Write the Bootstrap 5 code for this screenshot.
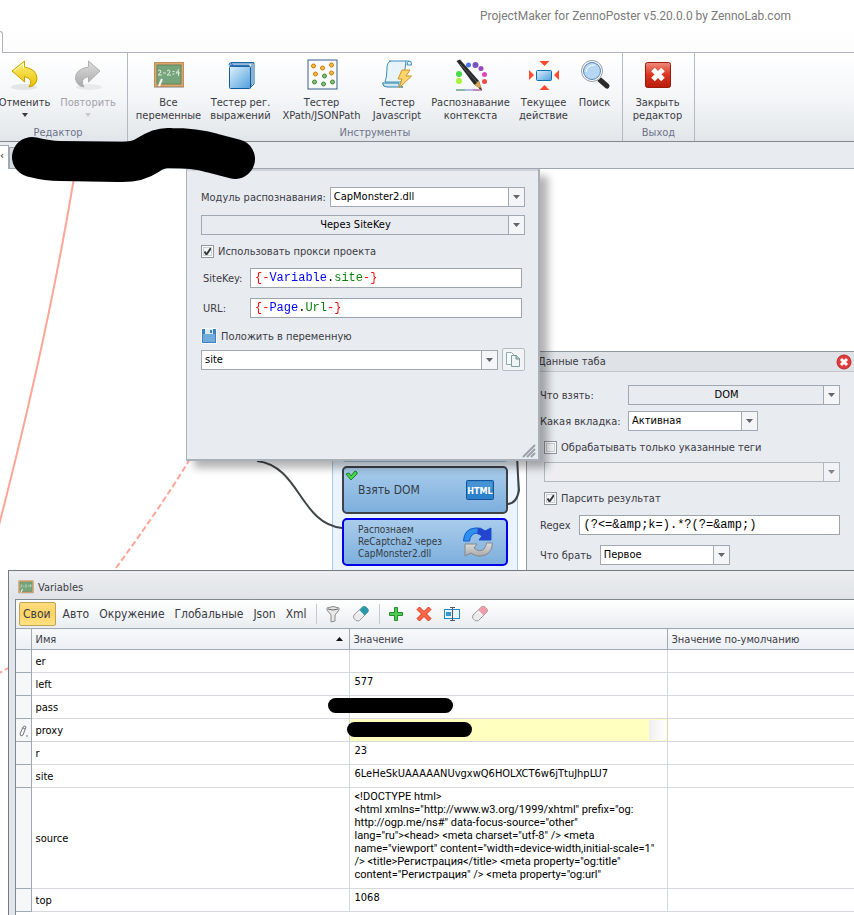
<!DOCTYPE html>
<html lang="ru">
<head>
<meta charset="utf-8">
<meta name="viewport" content="width=device-width, initial-scale=1">
<title>ProjectMaker for ZennoPoster</title>
<link rel="stylesheet" href="https://cdn.jsdelivr.net/npm/bootstrap@5.3.0/dist/css/bootstrap.min.css">
<style>
  :root { --edge: #a0a8b1; --face: #e8ebf0; --ink: #3b3b44; }
  body { font: 11px/13px "DejaVu Sans Condensed", "Noto Sans", sans-serif; color: var(--ink); background: #fff; }
  label, select, input, button { font: inherit; }
  button { border: 0; background: none; padding: 0; color: inherit; }
  svg { flex: none; }

  .caption-bar { height: 53px; background: linear-gradient(#fff 50%, #fcfcfd); border-bottom: 1px solid #afb3b9; }
  .caption-text { font: 12px/16px Roboto, sans-serif; color: #7b7b7b; padding: 8px 63px 0 0; }
  .file-tab { width: 3px; height: 22px; margin-bottom: -1px; background: #fff; border: solid #afb3b9; border-width: 1px 1px 0 0; border-radius: 0 3px 0 0; }

  .ribbon { height: 89px; background: linear-gradient(#fff, #f4f6f8 50%, #e2e6ea); border-bottom: 1px solid #83898f; }
  .ribbon-group { border-right: 1px solid #b4b9bf; display: grid; grid-template-rows: 1fr 15px; }
  .ribbon-tools { display: grid; padding: 6px 6px 0 4px; align-content: start; }
  .ribbon-tools button { display: flex; flex-direction: column; align-items: center; white-space: nowrap; }
  .ribbon-tools svg.tool { margin-bottom: 5px; }
  .ribbon-title { text-align: center; color: #6d7389; }
  .ribbon-edit .ribbon-title { padding-right: 11px; }
  .ribbon-edit .ribbon-tools { padding: 6px 0 0; grid-template-columns: 49px 78px; }
  .is-off { color: #a3a3ab; }
  .cols-tools { grid-template-columns: 73px 71px 91px 60px 87px 59px 43px; }
  .cols-exit { grid-template-columns: 61px; }
  .caret { width: 0; border: solid transparent; border-width: 4px 3px 0; border-top-color: currentColor; margin-top: 4px; }

  .doc-tabs { height: 27px; background: var(--face); border-bottom: 1px solid var(--edge); }
  .doc-tab-on { width: 9px; height: 24px; margin-bottom: -1px; background: #fff; border: solid var(--edge); border-width: 1px 1px 0 0; line-height: 20px; color: #111; }
  .doc-tab-off { width: 178px; height: 21px; background: #d5dae1; border: 1px solid var(--edge); border-bottom: 0; }
  .scribble { left: 0; top: 120px; z-index: 9; pointer-events: none; }

  .desk { min-height: 746px; }
  .wires { inset: 0; width: 100%; height: 100%; }

  .node-lane { left: 332px; top: 280px; width: 186px; height: 130px; background: #ebf4fe; border: 1px solid #a9c9e8; padding: 0 9px; }
  .node-stub { height: 12px; background: #9fc6e6; border-radius: 0 0 4px 4px; margin-bottom: 4px; }
  .node { height: 48px; border: 2px solid #3c4248; border-radius: 5px; background: linear-gradient(#a9cceb, #7dafdd); margin-bottom: 4px; color: #333b45; padding: 0 12px 0 14px; }
  .node-current { border-color: #0000e6; font-size: 10px; line-height: 12px; }
  .node-name { font-size: 12px; }
  .node-tick { left: 1px; top: 2px; }

  .pane-tab { left: 526px; right: 0; top: 182px; height: 230px; background: var(--face); border: solid #8f979f; border-width: 1px 0 0 1px; }
  .pane-head { height: 20px; background: #dfe3e7; border-bottom: 1px solid #c3c8cd; padding: 0 2px 0 11px; }
  .pane-body { padding: 13px 14px 0 13px; }
  .w-label { width: 88px; }
  .w-pick { width: 130px; }

  .dialog-box { left: 186px; top: 0; width: 354px; height: 292px; background: var(--face); border: solid #a9b0b8; border-width: 0 2px 2px 1px; padding: 18px 13px 0 14px; box-shadow: 8px 7px 8px rgba(0,0,0,.3), inset 0 2px 0 #d0d4da; z-index: 3; }
  .grip { right: 2px; bottom: 1px; }
  .gap-xs { margin-top: 6px; }
  .gap-s { margin-top: 8px; }
  .gap-m { margin-top: 10px; }
  .key-label { width: 49px; flex: none; padding-left: 2px; }
  .key-field { margin-right: 3px; }

  .pick { height: 20px; border: 1px solid var(--edge); border-radius: 0; appearance: none; color: #000; padding: 0 18px 0 3px; min-width: 0; width: 100%; line-height: 18px;
    background: url("data:image/svg+xml,%3Csvg xmlns='http://www.w3.org/2000/svg' width='16' height='18'%3E%3Crect width='16' height='18' fill='%23f3f5f7'/%3E%3Cpath d='M0 0h1v18H0z' fill='%23a0a8b1'/%3E%3Cpath d='M5 7h7L8.500 11z' fill='%2360656b'/%3E%3C/svg%3E") right center no-repeat #fff; }
  .pick-face { background-color: var(--face); text-align: center; text-align-last: center; }
  .pick:disabled { background-color: #f0f0f0; opacity: .75; }
  .code-box { background: #fff; height: 20px; }
  .code-input { display: block; width: 100%; height: 20px; border: 1px solid #9ba3ab; border-radius: 0; padding: 0 4px; background: transparent; color: #000; font: 12px/18px "Liberation Mono", monospace; }
  .tint { color: transparent; background-origin: content-box; background-clip: text; -webkit-background-clip: text; }
  .tint-variable { background-image: linear-gradient(90deg, #f00 2ch, #00f 2ch 10ch, #000 10ch 11ch, #008000 11ch 15ch, #f00 15ch); }
  .tint-page { background-image: linear-gradient(90deg, #f00 2ch, #00f 2ch 6ch, #000 6ch 7ch, #008000 7ch 10ch, #f00 10ch); }
  .tick { appearance: none; flex: none; width: 13px; height: 13px; margin: 0; border: 1px solid #8f979f; background: #f4f5f6; box-shadow: inset 0 0 0 1px #fff, inset 0 0 0 2px #ccd0d4; }
  .tick:checked { background: url("data:image/svg+xml,%3Csvg xmlns='http://www.w3.org/2000/svg' width='11' height='11'%3E%3Cpath d='M2.500 5.500l2 3L9 2' fill='none' stroke='%2333383d' stroke-width='2'/%3E%3C/svg%3E") center no-repeat #f4f5f6; }
  .copy-btn { width: 23px; height: 23px; border: 1px solid #b6bcc3; border-radius: 2px; background: #f1f3f5; }

  .vars { margin: 401px 0 0 8px; background: #e2e6ea; border: solid #727a80; border-width: 1px 0 0 1px; padding-left: 6px; z-index: 5; }
  .vars-head { height: 28px; margin-left: -6px; padding: 4px 0 0 9px; background: linear-gradient(#eceef1, #dfe3e7); }
  .vars-panel { background: #fff; border: solid #818990; border-width: 1px 0 0 1px; }
  .vars-tools { height: 28px; background: linear-gradient(#fff, #e9edf0); padding: 0 3px; font-size: 12px; line-height: 16px; }
  .vars-tools button { height: 24px; padding: 0 5px; }
  .vars-tools .on { border: 1px solid #c4a254; border-radius: 2px; background: linear-gradient(#fbdc7d, #fdd466 50%, #ffe183); padding: 0 4px 0 3px; margin-right: 2px; }
  .bar-line { width: 1px; height: 20px; background: #c5cacf; margin: 0 2px 0 4px; }
  .vars-table { width: 100%; table-layout: fixed; border-collapse: collapse; color: #000; }
  .vars-table th { height: 21px; font-weight: 400; padding: 0 4px; background: linear-gradient(#f8f9fa, #ebeff4); border: solid var(--edge); border-width: 1px 0 1px 1px; color: var(--ink); }
  .vars-table td { height: 23px; padding: 0 0 0 4px; border: solid #d5d9dd; border-width: 0 0 1px 1px; }
  .vars-table td:first-child { background: #f5f7f9; padding: 0; text-align: center; border-left: 0; border-bottom-color: var(--edge); }
  .vars-table th:first-child { border-left: 0; }
  .vars-table td:nth-child(2) { border-left-color: var(--edge); }
  .vars-table td:nth-child(3) { vertical-align: top; padding: 2px 0 0 5px; }
  .vars-table .tall td { height: 101px; }
  .vars-table .markup { font-family: Roboto, sans-serif; }
  .vars-table .edited { background: linear-gradient(90deg, #efefef, #fff) right 1px center / 17px 20px no-repeat #ffffbf; }
  .c-mark { width: 15px; }
  .c-main { width: 318px; }
  .redact { width: 125px; height: 15px; border-radius: 8px; background: #000; }
  .redact-pass { left: -27px; top: 0; }
  .redact-proxy { left: -8px; top: 1px; }
</style>
<script src="https://cdn.jsdelivr.net/npm/bootstrap@5.3.0/dist/js/bootstrap.bundle.min.js"></script>
</head>
<body class="d-flex flex-column min-vh-100 position-relative overflow-hidden">

<svg width="0" height="0" class="position-absolute" aria-hidden="true">
  <defs>
    <linearGradient id="gBlue" x1="0" y1="0" x2="1" y2="1"><stop offset="0" stop-color="#dff1fd"/><stop offset="1" stop-color="#4f9fdc"/></linearGradient>
    <linearGradient id="gGold" x1="0" y1="0" x2="0" y2="1"><stop offset="0" stop-color="#fff27a"/><stop offset="1" stop-color="#e6bf00"/></linearGradient>
    <linearGradient id="gGray" x1="0" y1="0" x2="0" y2="1"><stop offset="0" stop-color="#dedede"/><stop offset="1" stop-color="#a9a9a9"/></linearGradient>
    <linearGradient id="gRed" x1="0" y1="0" x2="0" y2="1"><stop offset="0" stop-color="#ef8d7c"/><stop offset=".5" stop-color="#d93420"/><stop offset="1" stop-color="#b81b0a"/></linearGradient>
    <symbol id="board" viewBox="0 0 32 32">
      <path d="M1 27h30v2H1z" fill="#b9bcc0"/>
      <rect x="1.500" y="3.500" width="29" height="24" fill="#dba76c" stroke="#c0905a"/>
      <rect x="4" y="6" width="24" height="19" fill="#76a57c" stroke="#68845f"/>
      <path d="M5 12q2-2 3 0q0 2-3 4h4M10 14h3M14 12q2-2 3 0q0 2-3 4h4M19.500 12.500h2M19.500 15h2M26 10l-3 4h4M25.500 12v5" fill="none" stroke="#e6efe4" stroke-width=".9"/>
      <path d="M9 20l-3 7" stroke="#fff" stroke-width="2"/>
    </symbol>
    <symbol id="eraser" viewBox="0 0 18 18">
      <path d="M2 10L11 1.500Q12.500 1 14 2L16 4Q17 5.500 16 7L7.500 15.500Q6 16.500 4 15.500L2 13.500Q1 12 2 10z" fill="#ebebeb" stroke="#999"/>
      <path d="M7.500 5L11 1.500Q12.500 1 14 2L16 4Q17 5.500 16 7L12.500 10.500z" fill="currentColor"/>
      <path d="M4 10l3-3 4 3" stroke="#fff" fill="none"/>
    </symbol>
  </defs>
</svg>

<header class="caption-bar d-flex justify-content-between">
  <span class="file-tab align-self-end"></span>
  <span class="caption-text">ProjectMaker for ZennoPoster v5.20.0.0 by ZennoLab.com</span>
</header>

<nav class="ribbon d-flex" aria-label="Лента">
  <section class="ribbon-group ribbon-edit">
    <div class="ribbon-tools">
      <button type="button"><svg class="tool" width="32" height="32" viewBox="0 0 32 32"><ellipse cx="15" cy="28" rx="13" ry="3" fill="#e4e5e7"/><path d="M3 12L15.500 2v6Q28 10 28 20Q27 27 20 28Q25 20 15.500 17.500V23z" fill="url(#gGold)" stroke="#c9a400"/><path d="M5 12l9.500-7.500v5" fill="none" stroke="#fffbc4"/></svg>Отменить<span class="caret"></span></button>
      <button type="button" disabled class="is-off"><svg class="tool" width="32" height="32" viewBox="0 0 32 32"><ellipse cx="17" cy="28" rx="13" ry="3" fill="#e9eaec"/><path d="M28 12L16.500 2v6Q3 10 3.500 20Q5 27 12 28Q7 20 16.500 17.500V23z" fill="url(#gGray)" stroke="#b0b0b0"/></svg>Повторить<span class="caret opacity-50"></span></button>
    </div>
    <div class="ribbon-title">Редактор</div>
  </section>
  <section class="ribbon-group">
    <div class="ribbon-tools cols-tools">
      <button type="button"><svg class="tool" width="32" height="32"><use href="#board"/></svg>Все<br>переменные</button>
      <button type="button"><svg class="tool" width="32" height="32" viewBox="0 0 32 32"><path d="M6 4h23v21l-4 4z" fill="#fff" stroke="#1263a8"/><path d="M4 6q0-2.500 3-2.500h22M27 5v20l-2 3" fill="none" stroke="#1b66aa"/><rect x="4.500" y="7.500" width="21" height="22" rx="1" fill="url(#gBlue)" stroke="#14599c"/><path d="M4.500 6.500h20" stroke="#2d75b4" stroke-width="2"/></svg>Тестер рег.<br>выражений</button>
      <button type="button"><svg class="tool" width="32" height="32" viewBox="0 0 32 32"><rect x="2" y="1" width="29" height="29" fill="#fbfbfb" stroke="#395f8d"/><g fill="#f7bd45" stroke="#c87a08"><circle cx="7.500" cy="7" r="2"/><circle cx="16.500" cy="9" r="2"/><circle cx="25.500" cy="6" r="2"/><circle cx="9.500" cy="15" r="2"/><circle cx="25.500" cy="14" r="2"/></g><g fill="#86bf78" stroke="#3b873a"><circle cx="18.500" cy="17" r="2"/><circle cx="8.500" cy="23" r="2"/><circle cx="17.500" cy="25" r="2"/><circle cx="26.500" cy="23" r="2"/></g></svg>Тестер<br>XPath/JSONPath</button>
      <button type="button"><svg class="tool" width="32" height="32" viewBox="0 0 32 32"><path d="M8 2h20q3 0 2.500 4H26q0-3 2-4M10 2Q6 3 6 9q0 9-2 14H20q4-8 5-21" fill="#e8f4f9" stroke="#3c8db5"/><path d="M1.500 24H18q-1 4 4 4H6q-4 0-4.500-4z" fill="#cde8f4" stroke="#2b80ab"/><path d="M21 11h8l-4 6h5.500L18 29l3-9h-4z" fill="#fbd56e" stroke="#d59220"/></svg>Тестер<br>Javascript</button>
      <button type="button"><svg class="tool" width="32" height="32" viewBox="0 0 32 32"><path d="M1 31h26" stroke="#647ccb"/><path d="M1 31h9" stroke="#5dbb65"/><path d="M18 31h9" stroke="#dd5a8a"/><g><circle cx="4" cy="22" r="3" fill="#a8f538"/><circle cx="4" cy="15" r="3" fill="#45dc45"/><circle cx="13.500" cy="6" r="2.500" fill="#4a76e8"/><circle cx="20.500" cy="6" r="3" fill="#7454bc"/><circle cx="26" cy="9.500" r="2.500" fill="#9848b4"/><circle cx="29.500" cy="15.500" r="2.500" fill="#e043b7"/><circle cx="29.500" cy="22.500" r="2.500" fill="#f34848"/></g><path d="M1.500 2L5 .5 24 22l3 9-8-5.500z" fill="#292929"/><path d="M19 25.500l2-.5 1-2 2-1 3 9z" fill="#d6a752"/><path d="M5 5l17 18" stroke="#5d5d5d"/><path d="M25 28l2 3-3-1.500z" fill="#222"/></svg>Распознавание<br>контекста</button>
      <button type="button"><svg class="tool" width="32" height="32" viewBox="0 0 32 32"><rect x="8.500" y="11.500" width="15" height="10" rx="1" fill="url(#gBlue)" stroke="#0c70a8"/><g fill="#ff4a2d"><path d="M11.500 2h10l-5 5zM11.500 31h10l-5-5zM1 11v10l5-5zM31 11v10l-5-5z"/></g></svg>Текущее<br>действие</button>
      <button type="button"><svg class="tool" width="32" height="32" viewBox="0 0 32 32"><path d="M20 20l8 7" stroke="#2b2b2b" stroke-width="5" stroke-linecap="round"/><circle cx="13" cy="12" r="9.500" fill="url(#gBlue)" stroke="#fff" stroke-width="3"/><circle cx="13" cy="12" r="10.500" fill="none" stroke="#959ba3"/><circle cx="13" cy="12" r="8.500" fill="#b6d7f4" stroke="#5883b2"/><path d="M7 13q1-7 9-7" fill="none" stroke="#fff"/></svg>Поиск</button>
    </div>
    <div class="ribbon-title">Инструменты</div>
  </section>
  <section class="ribbon-group">
    <div class="ribbon-tools cols-exit">
      <button type="button"><svg class="tool" width="32" height="32" viewBox="0 0 32 32"><rect x="3.500" y="3.500" width="25" height="25" rx="2" fill="url(#gRed)" stroke="#9d1a0c"/><path d="M11 10.500l10 10M21 10.500l-10 10" stroke="#fff" stroke-width="5"/></svg>Закрыть<br>редактор</button>
    </div>
    <div class="ribbon-title">Выход</div>
  </section>
</nav>

<div class="doc-tabs d-flex align-items-end"><span class="doc-tab-on">‹</span><span class="doc-tab-off"></span></div>
<svg class="scribble position-absolute" width="270" height="70" viewBox="0 120 270 70" aria-hidden="true"><path d="M32 157Q48 161 60 161L118 162Q136 163 148 155Q160 147 170 148Q195 148 212 153L235 159" fill="none" stroke="#000" stroke-width="40" stroke-linecap="round" stroke-linejoin="round"/></svg>

<main class="desk position-relative flex-grow-1 d-flex flex-column">
  <svg class="wires position-absolute" aria-hidden="true"><g transform="translate(0 -169)" fill="none"><path d="M74 178Q47 340 -1 525" stroke="#ffa597" stroke-width="2"/><path d="M190 459Q157 513 110 576M10 667L-4 675" stroke="#ffa597" stroke-width="2" stroke-dasharray="6 3"/></g></svg>

  <div class="node-lane position-absolute">
    <div class="node-stub"></div>
    <div class="node position-relative d-flex align-items-center justify-content-between">
      <svg class="node-tick position-absolute" width="13" height="12" viewBox="0 0 13 12"><path d="M1 4l3-1 2 3 4-5 2 1v2L6 10z" fill="#4bd84e" stroke="#18861f"/></svg>
      <span class="node-name">Взять DOM</span>
      <svg width="28" height="20" viewBox="0 0 28 20" role="img" aria-label="HTML"><rect x=".5" y=".5" width="27" height="19" rx="1" fill="#2b82ca" stroke="#14549c"/><path d="M1.500 1.500h25v8h-25z" fill="#4593d2"/><text x="14" y="14" text-anchor="middle" fill="#fff" font-family="DejaVu Sans Condensed, sans-serif" font-weight="700" font-size="9">HTML</text></svg>
    </div>
    <div class="node node-current d-flex align-items-center justify-content-between">
      <span>Распознаем<br>ReCaptcha2 через<br>CapMonster2.dll</span>
      <svg width="32" height="32" viewBox="0 0 32 32"><path d="M1.500 15Q2 3 13 2Q19 1 23 5L29 2V14H17L20 10Q14 5 10 9Q8 11 7.500 15z" fill="#2b90f0" stroke="#185ac0"/><path d="M16 2Q20 2 23 5L29 2V14H17L20 10Q18 8 15 8z" fill="#2444cf"/><path d="M30.500 17Q30 29 19 30Q13 31 9 27L3 30V18H15L12 22Q18 27 22 23Q24 21 24.500 17z" fill="url(#gGray)" stroke="#85888c"/></svg>
    </div>
  </div>
  <svg class="wires position-absolute" aria-hidden="true"><g transform="translate(0 -169)" fill="none" stroke="#3f4449" stroke-width="2"><path d="M257 461C300 466 300 524 342 528M517 455Q518 478 519 490Q517 503 508 504"/></g></svg>

  <section class="pane-tab position-absolute">
    <div class="pane-head d-flex align-items-center justify-content-between">Данные таба
      <button type="button" aria-label="Закрыть"><svg class="d-block" width="16" height="16" viewBox="0 0 16 16"><circle cx="8" cy="8" r="7" fill="#e33b3b" stroke="#bb2929"/><path d="M5 5l6 6M11 5l-6 6" stroke="#fff" stroke-width="3"/></svg></button>
    </div>
    <div class="pane-body">
      <div class="d-flex align-items-center"><label for="what" class="w-label flex-shrink-0">Что взять:</label><select id="what" class="pick pick-face"><option>DOM</option></select></div>
      <div class="d-flex align-items-center gap-xs"><label for="which" class="w-label flex-shrink-0 text-nowrap">Какая вкладка:</label><div class="w-pick"><select id="which" class="pick"><option>Активная</option></select></div></div>
      <div class="d-flex align-items-center gap-1 gap-m ps-1"><input class="tick" type="checkbox" id="tags"><label for="tags">Обрабатывать только указанные теги</label></div>
      <div class="gap-s ps-1 d-flex"><select class="pick" disabled aria-label="Теги"><option></option></select></div>
      <div class="d-flex align-items-center gap-1 gap-m ps-1"><input class="tick" type="checkbox" id="parse" checked><label for="parse">Парсить результат</label></div>
      <div class="d-flex align-items-center gap-m gap-2"><label for="regex">Regex</label><div class="code-box flex-grow-1"><input class="code-input" id="regex" value="(?&lt;=&amp;amp;k=).*?(?=&amp;amp;)"></div></div>
      <div class="d-flex align-items-center gap-m gap-2"><label for="take">Что брать</label><div class="w-pick"><select id="take" class="pick"><option>Первое</option></select></div></div>
    </div>
  </section>

  <section class="dialog-box position-absolute">
    <div class="d-flex align-items-center gap-1"><label for="module" class="text-nowrap flex-shrink-0">Модуль распознавания:</label><select id="module" class="pick"><option>CapMonster2.dll</option></select></div>
    <div class="gap-s d-flex"><select class="pick pick-face" aria-label="Способ"><option>Через SiteKey</option></select></div>
    <div class="d-flex align-items-center gap-1 gap-m"><input class="tick" type="checkbox" id="proxyUse" checked><label for="proxyUse">Использовать прокси проекта</label></div>
    <div class="d-flex align-items-center gap-m"><label for="sitekey" class="key-label">SiteKey:</label><div class="code-box flex-grow-1 key-field"><input class="code-input tint tint-variable" id="sitekey" value="{-Variable.site-}"></div></div>
    <div class="d-flex align-items-center gap-m"><label for="url" class="key-label">URL:</label><div class="code-box flex-grow-1 key-field"><input class="code-input tint tint-page" id="url" value="{-Page.Url-}"></div></div>
    <div class="d-flex align-items-center gap-1 gap-m"><svg width="16" height="16" viewBox="0 0 16 16"><path d="M0 0h16v16H0z" fill="#fff"/><rect x="1" y="1" width="14" height="14" fill="#3a83c2"/><rect x="2" y="6" width="12" height="8" fill="#70abd9"/><path d="M4 1h8v5H4z" fill="#dcecf7"/><path d="M9 2h2v3H9z" fill="#4381b5"/></svg><label for="target">Положить в переменную</label></div>
    <div class="d-flex align-items-center gap-1 mt-1"><select id="target" class="pick"><option>site</option></select><button type="button" class="copy-btn flex-shrink-0 d-flex align-items-center justify-content-center" aria-label="Копировать"><svg width="17" height="17" viewBox="0 0 17 17"><path d="M1.500 1.500h5l3 3v9h-8z" fill="#f5fafa" stroke="#8fa9ae"/><path d="M6.500 4.500h5l3 3v8h-8z" fill="#edf6f5" stroke="#829da2"/><path d="M11 4v4h4" fill="#a9cccd" stroke="#6e8e94"/></svg></button></div>
    <svg class="grip position-absolute" width="14" height="14" viewBox="0 0 14 14"><path d="M1 13L13 1M5 13l8-8M9 13l4-4" stroke="#9da2a8" stroke-width="2"/></svg>
  </section>

  <section class="vars position-relative flex-grow-1 d-flex flex-column">
    <div class="vars-head d-flex align-items-center gap-1"><svg width="16" height="16"><use href="#board"/></svg>Variables</div>
    <div class="vars-panel flex-grow-1">
      <div class="vars-tools d-flex align-items-center">
        <button type="button" class="on">Свои</button><button type="button">Авто</button><button type="button">Окружение</button><button type="button">Глобальные</button><button type="button">Json</button><button type="button">Xml</button>
        <span class="bar-line"></span>
        <button type="button" aria-label="Фильтр"><svg width="18" height="18" viewBox="0 0 18 18"><path d="M3 3Q9 0 15 3V5L11 10v6l-4 1v-7L3 5z" fill="#e8e8e8" stroke="#888"/><path d="M4 4q5 2 10 0" fill="none" stroke="#666"/></svg></button>
        <button type="button" aria-label="Сбросить фильтр"><svg width="18" height="18" color="#2a98ab"><use href="#eraser"/></svg></button>
        <span class="bar-line"></span>
        <button type="button" aria-label="Добавить"><svg width="18" height="18" viewBox="0 0 18 18"><path d="M7.500 2.500h3v5h5v3h-5v5h-3v-5h-5v-3h5z" fill="#4ccc50" stroke="#258c2b"/></svg></button>
        <button type="button" aria-label="Удалить"><svg width="18" height="18" viewBox="0 0 18 18"><path d="M2 4.500l2.500-2.500 4.500 4.500 4.500-4.500 2.500 2.500-4.500 4.500 4.500 4.500-2.500 2.500-4.500-4.500-4.500 4.500-2.500-2.500 4.500-4.500z" fill="#ff6847" stroke="#db3620"/></svg></button>
        <button type="button" aria-label="Переименовать"><svg width="18" height="18" viewBox="0 0 18 18"><rect x="1.500" y="4.500" width="15" height="9" fill="#e9f5fc" stroke="#2587c6"/><path d="M3 7h5v4H3z" fill="#3496cf"/><path d="M9.500 3v12M7 2.500h5M7 15.500h5" stroke="#555"/></svg></button>
        <button type="button" aria-label="Очистить"><svg width="18" height="18" color="#ed9ca8"><use href="#eraser"/></svg></button>
      </div>
      <table class="vars-table">
        <colgroup><col class="c-mark"><col class="c-main"><col class="c-main"><col></colgroup>
        <thead><tr><th></th><th><div class="d-flex justify-content-between align-items-center">Имя<svg width="12" height="6" viewBox="0 0 12 6"><path d="M3 5l3.500-4L10 5z" fill="#111"/></svg></div></th><th>Значение</th><th>Значение по-умолчанию</th></tr></thead>
        <tbody>
          <tr><td></td><td>er</td><td></td><td></td></tr>
          <tr><td></td><td>left</td><td>577</td><td></td></tr>
          <tr><td></td><td>pass</td><td><div class="position-relative"><span class="redact redact-pass position-absolute"></span></div></td><td></td></tr>
          <tr><td><svg width="9" height="12" viewBox="0 0 9 12"><path d="M2 11l-1-2 3-7q2-2 3 0L4 10zM4 3l2 1M7 11h2" fill="none" stroke="#777"/></svg></td><td>proxy</td><td class="edited"><div class="position-relative"><span class="redact redact-proxy position-absolute"></span></div></td><td></td></tr>
          <tr><td></td><td>r</td><td>23</td><td></td></tr>
          <tr><td></td><td>site</td><td>6LeHeSkUAAAAANUvgxwQ6HOLXCT6w6jTtuJhpLU7</td><td></td></tr>
          <tr class="tall"><td></td><td>source</td><td class="markup text-nowrap">&lt;!DOCTYPE html&gt;<br>&lt;html xmlns="http://www.w3.org/1999/xhtml" prefix="og:<br>http://ogp.me/ns#" data-focus-source="other"<br>lang="ru"&gt;&lt;head&gt; &lt;meta charset="utf-8" /&gt; &lt;meta<br>name="viewport" content="width=device-width,initial-scale=1"<br>/&gt; &lt;title&gt;Регистрация&lt;/title&gt; &lt;meta property="og:title"<br>content="Регистрация" /&gt; &lt;meta property="og:url"</td><td></td></tr>
          <tr><td></td><td>top</td><td>1068</td><td></td></tr>
        </tbody>
      </table>
    </div>
  </section>
</main>
</body>
</html>
